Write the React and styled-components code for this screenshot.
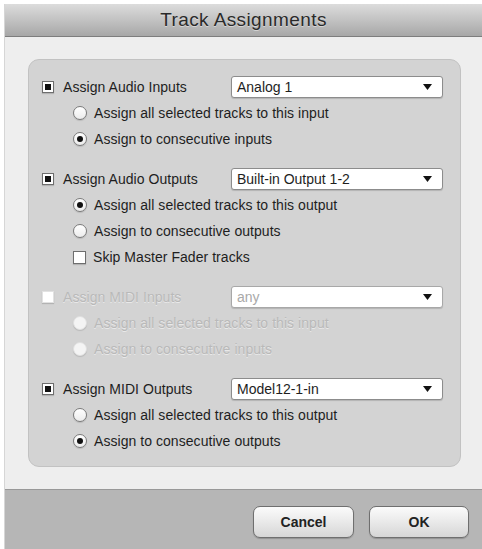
import React from "react";
import styled, { createGlobalStyle } from "styled-components";

const Global = createGlobalStyle`
  html, body { margin: 0; padding: 0; background: #fff; }
  body { font-family: "Liberation Sans", Arial, sans-serif; }
  #root { width: 482px; height: 549px; overflow: hidden; }
`;

const Window = styled.div`
  margin: 4px 0 0 5px;
  width: 477px;
  height: 545px;
  display: flex;
  flex-direction: column;
  background: #ececec;
  box-shadow: -1px 0 0 #d6d6d6;
`;

const TitleBar = styled.div`
  height: 32px;
  flex: none;
  display: flex;
  align-items: center;
  justify-content: center;
  background: linear-gradient(#dcdcdc, #c2c2c2 50%, #a7a7a7);
  border-bottom: 1px solid #7d7d7d;
  font-size: 19px;
  color: #2a2a2a;
  text-shadow: 0 1px 0 rgba(255,255,255,0.45);
  letter-spacing: 0.4px;
`;

const Content = styled.div`
  flex: none;
  height: 452px;
  box-sizing: border-box;
  padding: 22px 21px 22px 23px;
  display: flex;
  background: #eeeeee;
`;

const Group = styled.div`
  flex: 1;
  box-sizing: border-box;
  background: #d3d3d3;
  border: 1px solid #c2c2c2;
  border-radius: 11px;
  padding: 14px 17px 12px 13px;
  display: flex;
  flex-direction: column;
  gap: 14px;
`;

const Section = styled.div`
  display: flex;
  flex-direction: column;
`;

const Header = styled.div`
  height: 26px;
  display: grid;
  grid-template-columns: 189px 1fr;
  align-items: center;
`;

const Row = styled.div`
  height: 26px;
  display: flex;
  align-items: center;
  padding-left: 31px;
  gap: 7px;
`;

const LabelWrap = styled.div`
  display: flex;
  align-items: center;
  gap: 9px;
`;

const Label = styled.span`
  font-size: 14px;
  letter-spacing: 0.05px;
  color: ${(p) => (p.$disabled ? "#b9b9b9" : "#1e1e1e")};
  text-shadow: ${(p) => (p.$disabled ? "0 1px 0 rgba(255,255,255,0.5)" : "none")};
  white-space: nowrap;
`;

const Box = styled.span`
  width: ${(p) => p.$size || 12}px;
  height: ${(p) => p.$size || 12}px;
  box-sizing: border-box;
  flex: none;
  background: #fff;
  border: 1px solid ${(p) => (p.$disabled ? "#e2e2e2" : "#6e6e6e")};
  box-shadow: 0 1px 1px rgba(0,0,0,0.15);
  display: flex;
  align-items: center;
  justify-content: center;
  &::after {
    content: "";
    display: ${(p) => (p.$checked ? "block" : "none")};
    width: 6px;
    height: 6px;
    background: #111;
  }
`;

const Radio = styled.span`
  width: 14px;
  height: 14px;
  box-sizing: border-box;
  flex: none;
  border-radius: 50%;
  background: ${(p) => (p.$disabled ? "#f4f4f4" : "linear-gradient(#ffffff, #ececec)")};
  border: 1px solid ${(p) => (p.$disabled ? "#e0e0e0" : "#7a7a7a")};
  box-shadow: 0 1px 1px rgba(0,0,0,0.12);
  display: flex;
  align-items: center;
  justify-content: center;
  &::after {
    content: "";
    display: ${(p) => (p.$checked ? "block" : "none")};
    width: 6px;
    height: 6px;
    border-radius: 50%;
    background: #111;
  }
`;

const Select = styled.div`
  height: 22px;
  box-sizing: border-box;
  background: #fff;
  border: 1px solid ${(p) => (p.$disabled ? "#a8a8a8" : "#8c8c8c")};
  border-radius: 3px;
  box-shadow: 0 1px 1px rgba(0,0,0,0.15);
  display: flex;
  align-items: center;
  justify-content: space-between;
  padding: 0 10px 0 5px;
  font-size: 14px;
  color: ${(p) => (p.$disabled ? "#a9a9a9" : "#1e1e1e")};
`;

const Arrow = styled.svg`
  width: 9px;
  height: 6px;
  display: block;
`;

const Footer = styled.div`
  flex: 1;
  background: #b6b6b6;
  border-top: 1px solid #989898;
  display: flex;
  justify-content: flex-end;
  align-items: flex-start;
  padding: 16px 13px 0 0;
  gap: 15px;
`;

const Button = styled.button`
  width: ${(p) => p.$w}px;
  height: 32px;
  border: 1px solid #6f6f6f;
  border-radius: 7px;
  background: linear-gradient(#fbfbfb, #e9e9e9 50%, #d6d6d6);
  box-shadow: 0 1px 1px rgba(0,0,0,0.2);
  font-family: "Liberation Sans", Arial, sans-serif;
  font-weight: bold;
  font-size: 14px;
  color: #222;
  padding: 0;
`;

const DropArrow = () => (
  <Arrow viewBox="0 0 9 6">
    <path d="M0 0 H9 L4.5 6 Z" fill="#111" />
  </Arrow>
);

const sections = [
  {
    label: "Assign Audio Inputs",
    value: "Analog 1",
    checked: true,
    options: [
      { text: "Assign all selected tracks to this input", on: false },
      { text: "Assign to consecutive inputs", on: true },
    ],
  },
  {
    label: "Assign Audio Outputs",
    value: "Built-in Output 1-2",
    checked: true,
    options: [
      { text: "Assign all selected tracks to this output", on: true },
      { text: "Assign to consecutive outputs", on: false },
    ],
    extra: "Skip Master Fader tracks",
  },
  {
    label: "Assign MIDI Inputs",
    value: "any",
    checked: false,
    disabled: true,
    options: [
      { text: "Assign all selected tracks to this input", on: false },
      { text: "Assign to consecutive inputs", on: false },
    ],
  },
  {
    label: "Assign MIDI Outputs",
    value: "Model12-1-in",
    checked: true,
    options: [
      { text: "Assign all selected tracks to this output", on: false },
      { text: "Assign to consecutive outputs", on: true },
    ],
  },
];

export default function App() {
  return (
    <>
      <Global />
      <Window>
        <TitleBar>Track Assignments</TitleBar>
        <Content>
          <Group>
            {sections.map((s) => (
              <Section key={s.label}>
                <Header>
                  <LabelWrap>
                    <Box $checked={s.checked} $disabled={s.disabled} />
                    <Label $disabled={s.disabled}>{s.label}</Label>
                  </LabelWrap>
                  <Select $disabled={s.disabled}>
                    <span>{s.value}</span>
                    <DropArrow />
                  </Select>
                </Header>
                {s.options.map((o) => (
                  <Row key={o.text}>
                    <Radio $checked={o.on} $disabled={s.disabled} />
                    <Label $disabled={s.disabled}>{o.text}</Label>
                  </Row>
                ))}
                {s.extra && (
                  <Row>
                    <Box $size={13} />
                    <Label>{s.extra}</Label>
                  </Row>
                )}
              </Section>
            ))}
          </Group>
        </Content>
        <Footer>
          <Button $w={101}>Cancel</Button>
          <Button $w={100}>OK</Button>
        </Footer>
      </Window>
    </>
  );
}
